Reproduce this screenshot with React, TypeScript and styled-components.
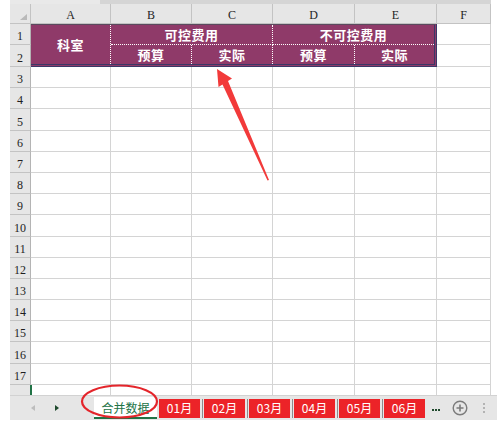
import React from "react";
import styled, { createGlobalStyle } from "styled-components";

const GlobalStyle = createGlobalStyle`
  html, body { margin: 0; padding: 0; background: #ffffff; }
  body { font-family: "Noto Sans CJK SC", "Noto Sans", sans-serif; }
  * { box-sizing: border-box; }
`;

const GRID = "#d4d4d4";
const HEAD_LINE = "#c3c3c3";
const HEAD_BG = "#e6e6e6";
const PURPLE = "#8f3a69";
const RED = "#ec2328";
const GREEN = "#217346";

const Page = styled.div`
  position: relative;
  width: 497px;
  height: 427px;
  overflow: hidden;
  background: #fff;
`;

const Sheet = styled.div`
  margin-left: 10px;
  width: 481px;
  display: grid;
  grid-template-columns: 21px 80px 81px 81px 82px 82px 54px;
  grid-template-rows: 4px 20px 21px 22px repeat(15, 21.2px) 10px;
`;

const TopStrip = styled.div`
  grid-column: 1 / -1;
  display: flex;
  background: #d5d5d5;
`;

const TopStripLight = styled.div`
  width: 90px;
  background: #e9e9e9;
`;

const Corner = styled.div`
  position: relative;
  background: ${HEAD_BG};
  border-right: 1px solid ${HEAD_LINE};
  border-bottom: 1px solid ${HEAD_LINE};
  &::after {
    content: "";
    position: absolute;
    right: 3px;
    bottom: 3px;
    width: 0;
    height: 0;
    border-left: 7px solid transparent;
    border-bottom: 6px solid #b9b9b9;
  }
`;

const ColHead = styled.div`
  background: ${HEAD_BG};
  border-right: 1px solid ${HEAD_LINE};
  border-bottom: 1px solid ${HEAD_LINE};
  display: flex;
  align-items: flex-end;
  justify-content: center;
  padding-bottom: 1px;
  font-family: "Liberation Serif", "DejaVu Serif", serif;
  font-size: 12px;
  line-height: 14px;
  color: #1e1e1e;
`;

const RowHead = styled.div<{ $partial?: boolean }>`
  background: ${HEAD_BG};
  border-right: 1px solid #b4b4b4;
  border-bottom: ${(p) => (p.$partial ? "none" : `1px solid ${HEAD_LINE}`)};
  display: flex;
  align-items: flex-end;
  justify-content: center;
  padding-bottom: 1px;
  font-family: "Liberation Serif", "DejaVu Serif", serif;
  font-size: 12px;
  line-height: 14px;
  color: #1e1e1e;
`;

const Cell = styled.div<{ $partial?: boolean; $selectedEdge?: boolean }>`
  background: #fff;
  border-right: 1px solid ${GRID};
  border-bottom: ${(p) => (p.$partial ? "none" : `1px solid ${GRID}`)};
  border-left: ${(p) => (p.$selectedEdge ? `2px solid ${GREEN}` : "none")};
  margin-left: ${(p) => (p.$selectedEdge ? "-1px" : "0")};
`;

const HeaderBlock = styled.div`
  grid-column: 2 / 7;
  grid-row: 3 / 5;
  background: ${PURPLE};
  border-top: 1px solid #5b4a5e;
  border-right: 3px double #3b3868;
  border-bottom: 3px double #3b3868;
  display: grid;
  grid-template-columns: 80px 81px 81px 82px 1fr;
  grid-template-rows: 20px 1fr;
  color: #ffffff;
  font-family: "Noto Sans CJK SC", "Noto Sans", sans-serif;
  font-weight: 700;
  font-size: 13px;
`;

const HeadCell = styled.div<{
  $col: string;
  $row: string;
  $right?: boolean;
  $bottom?: boolean;
}>`
  grid-column: ${(p) => p.$col};
  grid-row: ${(p) => p.$row};
  display: flex;
  align-items: center;
  justify-content: center;
  letter-spacing: 0.5px;
  line-height: 1;
  border-right: ${(p) => (p.$right ? "1px dotted #ffffff" : "none")};
  border-bottom: ${(p) => (p.$bottom ? "1px dotted #ffffff" : "none")};
`;

const TabBar = styled.div`
  margin-left: 10px;
  height: 25px;
  background: #e6e6e6;
  border-top: 1px solid #d2d2d2;
  display: flex;
  align-items: flex-start;
  padding-top: 1px;
`;

const NavArea = styled.div`
  width: 84px;
  height: 22px;
  display: flex;
  align-items: center;
  padding-left: 21px;
  gap: 20px;
`;

const NavArrow = styled.span<{ $dir: "left" | "right"; $active?: boolean }>`
  width: 0;
  height: 0;
  border-top: 3.5px solid transparent;
  border-bottom: 3.5px solid transparent;
  ${(p) =>
    p.$dir === "left"
      ? `border-right: 4px solid ${p.$active ? "#1f4a2d" : "#bdbdbd"};`
      : `border-left: 4px solid ${p.$active ? "#1f4a2d" : "#bdbdbd"};`}
`;

const ActiveTab = styled.div`
  width: 63px;
  height: 22px;
  background: #ffffff;
  border-bottom: 2px solid ${GREEN};
  color: ${GREEN};
  font-size: 12px;
  display: flex;
  align-items: center;
  justify-content: center;
  padding-top: 1px;
  margin-right: 2px;
`;

const RedTab = styled.div`
  width: 41px;
  height: 19px;
  margin-top: 2px;
  background: ${RED};
  color: #ffffff;
  font-size: 12px;
  line-height: 1;
  display: flex;
  align-items: center;
  justify-content: center;
`;

const TabSep = styled.div`
  width: 4px;
  height: 19px;
  margin-top: 2px;
  display: flex;
  justify-content: center;
  &::before {
    content: "";
    width: 1px;
    height: 100%;
    background: #8d8d8d;
  }
`;

const Ellipsis = styled.div`
  margin-left: 7px;
  width: 10px;
  height: 22px;
  display: flex;
  align-items: center;
  gap: 1px;
  padding-top: 4px;
`;

const Dot = styled.span<{ $color?: string }>`
  width: 2px;
  height: 2px;
  background: ${(p) => p.$color || "#1f4a2d"};
`;

const AddButton = styled.div`
  margin-left: 10px;
  width: 16px;
  height: 22px;
  display: flex;
  align-items: center;
  justify-content: center;
`;

const VDots = styled.div`
  margin-left: 15px;
  height: 22px;
  display: flex;
  flex-direction: column;
  justify-content: center;
  gap: 2px;
`;

const Overlay = styled.svg`
  position: absolute;
  left: 0;
  top: 0;
  pointer-events: none;
`;

const cols = ["A", "B", "C", "D", "E", "F"];
const dataRows = Array.from({ length: 15 }, (_, i) => i + 3);
const tabs = ["01月", "02月", "03月", "04月", "05月", "06月"];

export default function App() {
  return (
    <Page>
      <GlobalStyle />
      <Sheet>
        <TopStrip>
          <TopStripLight />
        </TopStrip>
        <Corner />
        {cols.map((c) => (
          <ColHead key={c}>{c}</ColHead>
        ))}
        <RowHead style={{ gridRow: 3 }}>1</RowHead>
        <HeaderBlock>
          <HeadCell $col="1" $row="1 / 3" $right>
            科室
          </HeadCell>
          <HeadCell $col="2 / 4" $row="1" $right $bottom>
            可控费用
          </HeadCell>
          <HeadCell $col="4 / 6" $row="1" $bottom>
            不可控费用
          </HeadCell>
          <HeadCell $col="2" $row="2" $right>
            预算
          </HeadCell>
          <HeadCell $col="3" $row="2" $right>
            实际
          </HeadCell>
          <HeadCell $col="4" $row="2" $right>
            预算
          </HeadCell>
          <HeadCell $col="5" $row="2">
            实际
          </HeadCell>
        </HeaderBlock>
        <Cell style={{ gridColumn: 7, gridRow: 3 }} />
        <RowHead style={{ gridRow: 4 }}>2</RowHead>
        <Cell style={{ gridColumn: 7, gridRow: 4 }} />
        {dataRows.map((r) => (
          <React.Fragment key={r}>
            <RowHead>{r}</RowHead>
            {cols.map((c) => (
              <Cell key={c} />
            ))}
          </React.Fragment>
        ))}
        <RowHead $partial />
        {cols.map((c, i) => (
          <Cell key={c} $partial $selectedEdge={i === 0} />
        ))}
      </Sheet>
      <TabBar>
        <NavArea>
          <NavArrow $dir="left" />
          <NavArrow $dir="right" $active />
        </NavArea>
        <ActiveTab>合并数据</ActiveTab>
        {tabs.map((t, i) => (
          <React.Fragment key={t}>
            <RedTab>{t}</RedTab>
            {i < tabs.length - 1 && <TabSep />}
          </React.Fragment>
        ))}
        <Ellipsis>
          <Dot />
          <Dot />
          <Dot />
        </Ellipsis>
        <AddButton>
          <svg width="16" height="16" viewBox="0 0 16 16">
            <circle cx="8" cy="8" r="6.8" fill="none" stroke="#7b7b7b" strokeWidth="1.4" />
            <path d="M8 4.5v7M4.5 8h7" stroke="#7b7b7b" strokeWidth="1.6" />
          </svg>
        </AddButton>
        <VDots>
          <Dot $color="#b3b3b3" />
          <Dot $color="#b3b3b3" />
          <Dot $color="#b3b3b3" />
        </VDots>
      </TabBar>
      <Overlay width="497" height="427" viewBox="0 0 497 427">
        <polygon
          points="217,69 232,78.5 228,81 269,180 267.5,180.5 222.5,84.5 218.5,87"
          fill="#f23a3a"
        />
        <ellipse
          cx="119.5"
          cy="401.5"
          rx="37.5"
          ry="16"
          fill="none"
          stroke="#e4252b"
          strokeWidth="2.2"
        />
      </Overlay>
    </Page>
  );
}
